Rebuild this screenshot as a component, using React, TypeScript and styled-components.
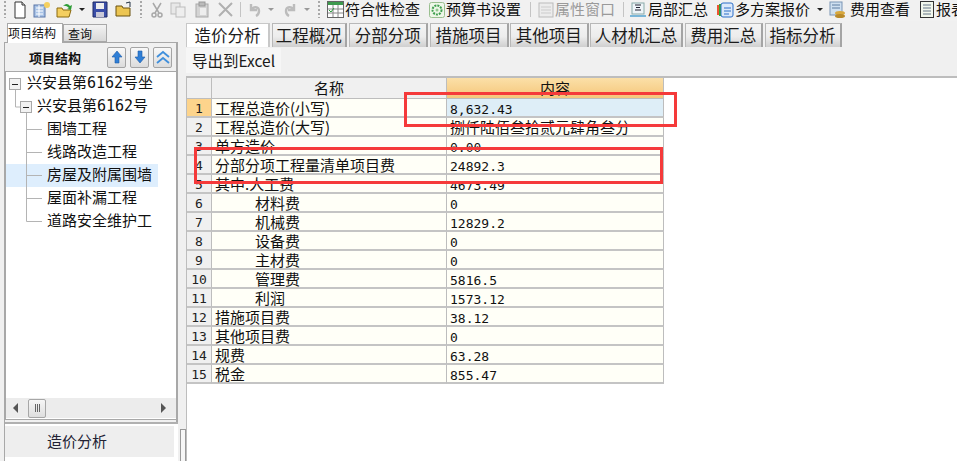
import React from 'react';
import styled, { createGlobalStyle } from 'styled-components';

const Global = createGlobalStyle`
  html, body { margin: 0; padding: 0; background: #fff; }
  #root { width: 957px; height: 461px; overflow: hidden; }
  * { box-sizing: border-box; }
`;
const FONT = `"Noto Sans CJK SC", "Liberation Sans", sans-serif`;
const BARFONT = `"Liberation Sans", "Noto Sans CJK SC", sans-serif`;
const CELLFONT = `"DejaVu Sans Mono", "Noto Sans CJK SC", monospace`;

const Page = styled.div`
  position: relative; width: 957px; height: 461px; overflow: hidden;
  background: #f0f0f0; font-family: ${FONT}; color: #111;
  display: flex; flex-direction: column;
`;
const Toolbar = styled.div`
  height: 21px; padding-bottom: 2px; display: flex; align-items: center; flex: none; overflow: hidden;
  background: #f1f1f1; font-family: ${BARFONT}; font-size: 15px; line-height: 17px; white-space: nowrap;
`;
const Cell = styled.div<{ $w: number }>`
  width: ${p => p.$w}px; flex: none; height: 17px;
  display: flex; align-items: center; justify-content: center;
`;
const Grip = styled.div<{ $w: number }>`
  width: ${p => p.$w}px; flex: none; height: 17px; display: flex; justify-content: center;
  &::before { content: ''; width: 2px; height: 17px;
    background: repeating-linear-gradient(#a8a8a8 0 2px, transparent 2px 4px); }
`;
const Rule = styled.div<{ $w: number }>`
  width: ${p => p.$w}px; flex: none; height: 15px; display: flex; justify-content: center;
  &::before { content: ''; width: 1px; background: #c4c4c4; }
`;
const Label = styled.span<{ $w: number; $off?: boolean }>`
  width: ${p => p.$w}px; flex: none; color: ${p => (p.$off ? '#9a9a9a' : '#111')};
`;
const Caret = styled.div<{ $w: number; $off?: boolean }>`
  width: ${p => p.$w}px; flex: none; display: flex; justify-content: center;
  &::before { content: ''; border: 3px solid transparent; border-bottom-width: 0;
    border-top: 3px solid ${p => (p.$off ? '#999' : '#222')}; }
`;
const Main = styled.div`
  flex: 1; display: flex; min-height: 0;
`;
const Side = styled.aside`
  width: 180px; flex: none; padding: 2px 2px 0 4px; display: flex; flex-direction: column;
`;
const SideTabs = styled.div`
  height: 19px; display: flex; padding-left: 3px; align-items: flex-end; font-size: 12px;
`;
const SideTab = styled.div<{ $active?: boolean }>`
  height: ${p => (p.$active ? 20 : 18)}px; width: ${p => (p.$active ? 56 : 44)}px;
  margin-bottom: ${p => (p.$active ? -1 : 0)}px; z-index: ${p => (p.$active ? 1 : 0)};
  line-height: 17px; padding-left: ${p => (p.$active ? 0 : 4)}px;
  background: ${p => (p.$active ? '#fff' : 'linear-gradient(#f3f3f3,#d8d8d8)')};
  border: 1px solid #a8a8a8; border-bottom: ${p => (p.$active ? 'none' : '1px solid #a8a8a8')};
`;
const SidePanel = styled.div`
  flex: 1; border: 1px solid #a8a8a8; border-bottom: none; border-right-width: 2px; background: #f0f0f0;
  display: flex; flex-direction: column; min-height: 0;
`;
const SideHead = styled.div`
  height: 28px; flex: none; display: flex; align-items: center; padding-left: 24px;
  font-size: 13px; font-weight: 700;
`;
const HeadTitle = styled.span` width: 78px; flex: none; `;
const HeadBtn = styled.div`
  width: 20px; height: 21px; margin-right: 4px; border: 1px solid #a4a4a4; border-radius: 2px;
  background: linear-gradient(#f8f8f8, #dcdcdc); display: flex; align-items: center; justify-content: center;
`;
const TreeBox = styled.div`
  height: 349px; flex: none; background: #fff; border: 1px solid #a8a8a8;
  display: flex; flex-direction: column; width: 172px;
`;
const Tree = styled.div` flex: 1; font-size: 15px; line-height: 23px; `;
const TreeRow = styled.div<{ $sel?: boolean }>`
  height: 23px; display: flex; align-items: center; white-space: nowrap; width: 152px;
  background: ${p => (p.$sel ? '#deeefd' : 'transparent')};
  font-family: ${CELLFONT};
`;
const Node = styled.svg` flex: none; display: block; `;
const HScroll = styled.div`
  height: 20px; flex: none; margin: 0 0 1px 0; background: #ececec; display: flex; align-items: center;
  padding-left: 7px;
`;
const Arrow = styled.div<{ $dir: 'l' | 'r' }>`
  border: 4px solid transparent; border-width: 5px 0;
  ${p => (p.$dir === 'l' ? 'border-right: 5px solid #555;' : 'border-left: 5px solid #555;')}
  flex: none; height: 10px; width: 5px;
`;
const Thumb = styled.div`
  width: 18px; height: 19px; margin: 0 115px 0 10px; flex: none; border: 1px solid #a6a6a6; border-radius: 2px;
  background: linear-gradient(#f6f6f6,#dedede); display: flex; align-items: center; justify-content: center; gap: 1px;
  & > i { width: 1px; height: 8px; background: #666; display: block; }
`;
const SideFoot = styled.div`
  margin-top: 2px; border-top: 2px solid #b0b0b0; padding: 2px 2px 0 0; flex: 1; background: #fff;
  margin-right: -2px;
`;
const FootBtn = styled.div`
  height: 31px; background: #eee; text-align: center; font-size: 15px; line-height: 30px; width: 169px; color: #223;
  padding-right: 25px;
`;
const Splitter = styled.div`
  width: 6px; flex: none; display: flex; align-items: flex-end; justify-content: center;
  &::before { content: ''; width: 4px; height: 31px; background: #f6f6f6; border: 1px solid #999; border-bottom: none; }
`;
const Content = styled.section`
  flex: 1; display: flex; flex-direction: column; min-width: 0; padding-top: 2px;
`;
const TabBar = styled.div` height: 24px; display: flex; flex: none; font-size: 16.5px; `;
const Tab = styled.div<{ $w: number; $active?: boolean }>`
  width: ${p => p.$w}px; height: 24px; flex: none; text-align: center; line-height: 23px; margin-right: 1.5px;
  background: ${p => (p.$active ? '#fff' : 'linear-gradient(#f4f4f4 0%, #ececec 55%, #cfcfcf 100%)')};
  border: 1px solid ${p => (p.$active ? '#c8c8c8' : '#b8b8b8')}; border-bottom: none;
  border-right: 2px solid ${p => (p.$active ? '#c8c8c8' : '#a4a4a4')};
  color: #1c1c1c; white-space: nowrap;
`;
const ActionBar = styled.div` height: 31px; flex: none; padding-top: 1px; border-bottom: 2px solid #bdbdbd; `;
const ExportBtn = styled.div`
  width: 95px; height: 25px; background: #f6f6f6; font-size: 15.5px; line-height: 25px; padding-left: 6px; color: #1a1a1a; white-space: nowrap;
`;
const Sheet = styled.div` flex: 1; background: #fff; border-left: 1px solid #bdbdbd; `;
const Table = styled.div`
  width: 477px; display: grid; grid-template-columns: 25px 235px 217px; grid-template-rows: 21px repeat(15, 19px); font-size: 15px;
`;
const Th = styled.div<{ $hot?: boolean }>`
  text-align: center; line-height: 20px; color: #111;
  background: ${p => (p.$hot ? 'linear-gradient(#fbe0a8,#f5c67a)' : '#f0f0f0')};
  border-right: 1px solid #bdbdbd; border-bottom: 1px solid #bdbdbd;
`;
const Num = styled.div<{ $hot?: boolean }>`
  background: ${p => (p.$hot ? '#fdd48c' : '#f0f0f0')}; text-align: center; line-height: 20px;
  border-right: 1px solid #bdbdbd; border-bottom: 2px solid #c4c4c4; font-family: ${CELLFONT}; font-size: 13px; color: #222;
`;
const Td = styled.div<{ $indent?: boolean; $hot?: boolean; $mono?: boolean }>`
  background: ${p => (p.$hot ? '#deeef7' : '#fffff7')}; white-space: nowrap;
  padding-left: ${p => (p.$indent ? 43 : 3)}px; line-height: ${p => (p.$mono ? 21 : 18)}px;
  border-right: 1px solid #bdbdbd; border-bottom: 2px solid #c4c4c4; color: #111;
  font-family: ${p => (p.$mono ? CELLFONT : FONT)}; font-size: ${p => (p.$mono ? 13 : 15)}px;
`;
const RedBox = styled.div<{ $x: number; $y: number; $w: number; $h: number }>`
  position: absolute; left: ${p => p.$x}px; top: ${p => p.$y}px; width: ${p => p.$w}px; height: ${p => p.$h}px;
  border: 3px solid #f53a3a; pointer-events: none;
`;

const Doc = () => (
  <svg width="16" height="18" viewBox="0 0 16 18"><path d="M3 1h7l3 3v13H3z" fill="#fff" stroke="#333"/><path d="M10 1v3h3" fill="#ddd" stroke="#333"/></svg>
);
const Sheets = () => (
  <svg width="18" height="18" viewBox="0 0 18 18"><rect x="1" y="4" width="11" height="12" fill="#a9c3e6" stroke="#5a76a8"/><path d="M3 7h7M3 10h7M3 13h7M6 4v12" stroke="#fff"/><circle cx="14" cy="4" r="3" fill="#f5d060"/></svg>
);
const FolderOpen = () => (
  <svg width="18" height="18" viewBox="0 0 18 18"><path d="M1 7h5l1 2h8l-2 7H1z" fill="#f4cf60" stroke="#8a6a10"/><path d="M7 5q4-4 7 0l2-1-1 5-4-1 2-1q-3-3-6-2z" fill="#2e9c36"/></svg>
);
const Save = () => (
  <svg width="16" height="17" viewBox="0 0 16 17"><path d="M1 1h14v15H1z" fill="#3a4ea8" stroke="#1f2a66"/><rect x="4" y="2" width="8" height="6" fill="#eee"/><rect x="4" y="11" width="8" height="5" fill="#c9c9d8"/></svg>
);
const FolderMini = () => (
  <svg width="17" height="17" viewBox="0 0 17 17"><path d="M1 5h6l1 2h7v8H1z" fill="#ecc552" stroke="#6b5310"/><path d="M11 2l4-1v5" fill="none" stroke="#234"/></svg>
);
const Scissors = () => (
  <svg width="12" height="16" viewBox="0 0 12 16" fill="none" stroke="#a8a8a8" strokeWidth="1.5"><path d="M2 1l6 10M10 1L4 11"/><circle cx="3" cy="13" r="2"/><circle cx="9" cy="13" r="2"/></svg>
);
const CopyI = () => (
  <svg width="16" height="16" viewBox="0 0 16 16"><rect x="1" y="1" width="9" height="11" fill="#e8e8e8" stroke="#bdbdbd"/><rect x="6" y="5" width="9" height="10" fill="#eee" stroke="#bdbdbd"/></svg>
);
const PasteI = () => (
  <svg width="16" height="17" viewBox="0 0 16 17"><rect x="2" y="3" width="12" height="13" fill="#d4d4d4" stroke="#aaa"/><rect x="5" y="1" width="6" height="4" fill="#bbb" stroke="#999"/><rect x="6" y="7" width="6" height="7" fill="#eee"/></svg>
);
const CloseI = () => (
  <svg width="15" height="15" viewBox="0 0 15 15" stroke="#b0b0b0" strokeWidth="2"><path d="M1 1l13 13M14 1L1 14"/></svg>
);
const Undo = ({ flip }: { flip?: boolean }) => (
  <svg width="15" height="15" viewBox="0 0 15 15" fill="none" stroke="#bcbcbc" strokeWidth="2.4" style={flip ? { transform: 'scaleX(-1)' } : undefined}><path d="M4 2v6h6M4.500 8C6 4 12 4 12 9c0 2-1 4-3 5"/></svg>
);
const TableI = () => (
  <svg width="17" height="17" viewBox="0 0 17 17"><rect x="0.500" y="0.500" width="16" height="16" fill="#fff" stroke="#666"/><rect x="1" y="1" width="15" height="3" fill="#3d9a4d"/><path d="M1 8h15M1 12h15M6 4v12M11 4v12" stroke="#888"/><path d="M2 9l2 2 3-4" stroke="#2b9c3c" fill="none"/></svg>
);
const Gear = () => (
  <svg width="16" height="16" viewBox="0 0 16 16"><rect x="0.500" y="0.500" width="15" height="15" rx="2" fill="#eef7e8" stroke="#9abf90"/><circle cx="8" cy="8" r="4.500" fill="none" stroke="#3f9f4f" strokeWidth="2" strokeDasharray="2 1"/><circle cx="8" cy="8" r="1.500" fill="#8fc78f"/></svg>
);
const WindowI = () => (
  <svg width="16" height="16" viewBox="0 0 16 16"><rect x="1" y="1" width="14" height="14" fill="#ececec" stroke="#bbb"/><path d="M3 5h10M3 8h10M3 11h10" stroke="#ccc"/></svg>
);
const SigmaI = () => (
  <svg width="16" height="16" viewBox="0 0 16 16"><rect x="2" y="1" width="12" height="11" fill="#eef4f8" stroke="#8aa"/><path d="M5 3h6M6 5.500h4M5 8h6" stroke="#223" /><rect x="0" y="13" width="16" height="2" fill="#79b6d8"/></svg>
);
const MultiI = () => (
  <svg width="17" height="16" viewBox="0 0 17 16"><rect x="0" y="3" width="3" height="10" fill="#e53"/><rect x="2" y="2" width="3" height="12" fill="#3a3"/><rect x="4" y="1" width="12" height="14" rx="2" fill="#dbe8fa" stroke="#2c6fc9"/><path d="M7 6h7M7 9h7M7 12h5" stroke="#2c6fc9"/></svg>
);
const CostI = () => (
  <svg width="17" height="18" viewBox="0 0 17 18"><rect x="1" y="1" width="12" height="13" fill="#cfe0f0" stroke="#7a95b5"/><path d="M3 4h8M3 7h8" stroke="#5c7da0"/><ellipse cx="11" cy="12" rx="5" ry="2" fill="#d8a83e"/><ellipse cx="11" cy="15" rx="5" ry="2" fill="#b98a2a"/></svg>
);
const ReportI = () => (
  <svg width="14" height="17" viewBox="0 0 14 17"><rect x="0.500" y="0.500" width="13" height="16" fill="#f2f7ec" stroke="#333"/><path d="M3 4h8M3 7h8M3 10h8M3 13h8" stroke="#678"/></svg>
);
const UpDown = ({ down }: { down?: boolean }) => (
  <svg width="12" height="14" viewBox="0 0 12 14" style={down ? { transform: 'rotate(180deg)' } : undefined}><path d="M6 1l5 6H8v6H4V7H1z" fill="#2f7fd6" stroke="#1c5aa8" strokeWidth="0.600"/></svg>
);
const Collapse = () => (
  <svg width="16" height="15" viewBox="0 0 16 15" fill="none" stroke="#3f8fdc" strokeWidth="1.800"><path d="M2 7l6-5 6 5M2 13l6-5 6 5"/></svg>
);

const L = '#b4b4b4';
const Box = ({ x, y }: { x: number; y: number }) => (
  <g>
    <rect x={x + 0.5} y={y + 0.5} width="11" height="11" fill="#f2f2f2" stroke="#a8a8a8" />
    <path d={`M${x + 3} ${y + 6.5}h6`} stroke="#222" />
  </g>
);
type Kind = 'root' | 'sub' | 'leaf' | 'last';
const Connector = ({ kind }: { kind: Kind }) => {
  const w = kind === 'root' ? 21 : kind === 'sub' ? 31 : 41;
  return (
    <Node width={w} height="23" viewBox={`0 0 ${w} 23`}>
      {kind === 'root' && <><path d="M9.500 18V23" stroke={L} /><Box x={3} y={6} /></>}
      {kind === 'sub' && <><path d="M9.500 0V12H14M20.500 18V23" stroke={L} fill="none" /><Box x={14} y={6} /></>}
      {kind === 'leaf' && <path d="M20.500 0V23M20 11.500H36" stroke={L} fill="none" />}
      {kind === 'last' && <path d="M20.500 0V11.500H36" stroke={L} fill="none" />}
    </Node>
  );
};

const tree: { t: string; k: Kind; sel?: boolean }[] = [
  { t: '兴安县第6162号坐', k: 'root' },
  { t: '兴安县第6162号', k: 'sub' },
  { t: '围墙工程', k: 'leaf' },
  { t: '线路改造工程', k: 'leaf' },
  { t: '房屋及附属围墙', k: 'leaf', sel: true },
  { t: '屋面补漏工程', k: 'leaf' },
  { t: '道路安全维护工', k: 'last' },
];
const tabs = [
  ['造价分析', 84], ['工程概况', 75.5], ['分部分项', 79.5], ['措施项目', 79], ['其他项目', 78.5],
  ['人材机汇总', 93], ['费用汇总', 78.5], ['指标分析', 77],
] as const;
const rows: { n: string; v: string; i?: boolean }[] = [
  { n: '工程总造价(小写)', v: '8,632.43' },
  { n: '工程总造价(大写)', v: '捌仟陆佰叁拾贰元肆角叁分' },
  { n: '单方造价', v: '0.00' },
  { n: '分部分项工程量清单项目费', v: '24892.3' },
  { n: '其中:人工费', v: '4673.49' },
  { n: '材料费', v: '0', i: true },
  { n: '机械费', v: '12829.2', i: true },
  { n: '设备费', v: '0', i: true },
  { n: '主材费', v: '0', i: true },
  { n: '管理费', v: '5816.5', i: true },
  { n: '利润', v: '1573.12', i: true },
  { n: '措施项目费', v: '38.12' },
  { n: '其他项目费', v: '0' },
  { n: '规费', v: '63.28' },
  { n: '税金', v: '855.47' },
];

export default function App() {
  return (
    <Page>
      <Global />
      <Toolbar>
        <Grip $w={9} />
        <Cell $w={22}><Doc /></Cell>
        <Cell $w={22}><Sheets /></Cell>
        <Cell $w={24}><FolderOpen /></Cell>
        <Caret $w={10} />
        <Cell $w={25}><Save /></Cell>
        <Cell $w={23}><FolderMini /></Cell>
        <Grip $w={12} />
        <Cell $w={20}><Scissors /></Cell>
        <Cell $w={22}><CopyI /></Cell>
        <Cell $w={25}><PasteI /></Cell>
        <Cell $w={22}><CloseI /></Cell>
        <Rule $w={8} />
        <Cell $w={20}><Undo /></Cell>
        <Caret $w={14} $off />
        <Cell $w={24}><Undo flip /></Cell>
        <Caret $w={10} $off />
        <Grip $w={14} />
        <Cell $w={19}><TableI /></Cell>
        <Label $w={82}>符合性检查</Label>
        <Cell $w={19}><Gear /></Cell>
        <Label $w={78}>预算书设置</Label>
        <Rule $w={13} />
        <Cell $w={18}><WindowI /></Cell>
        <Label $w={64} $off>属性窗口</Label>
        <Rule $w={8} />
        <Cell $w={21}><SigmaI /></Cell>
        <Label $w={68}>局部汇总</Label>
        <Cell $w={19}><MultiI /></Cell>
        <Label $w={80}>多方案报价</Label>
        <Caret $w={10} />
        <Cell $w={25}><CostI /></Cell>
        <Label $w={67}>费用查看</Label>
        <Cell $w={19}><ReportI /></Cell>
        <Label $w={21}>报表</Label>
      </Toolbar>
      <Main>
        <Side>
          <SideTabs>
            <SideTab $active>项目结构</SideTab>
            <SideTab>查询</SideTab>
          </SideTabs>
          <SidePanel>
            <SideHead>
              <HeadTitle>项目结构</HeadTitle>
              <HeadBtn><UpDown /></HeadBtn>
              <HeadBtn><UpDown down /></HeadBtn>
              <HeadBtn><Collapse /></HeadBtn>
            </SideHead>
            <TreeBox>
              <Tree>
                {tree.map(r => (
                  <TreeRow key={r.t} $sel={r.sel}>
                    <Connector kind={r.k} />
                    {r.t}
                  </TreeRow>
                ))}
              </Tree>
              <HScroll>
                <Arrow $dir="l" />
                <Thumb><i /><i /><i /></Thumb>
                <Arrow $dir="r" />
              </HScroll>
            </TreeBox>
            <SideFoot>
              <FootBtn>造价分析</FootBtn>
            </SideFoot>
          </SidePanel>
        </Side>
        <Splitter />
        <Content>
          <TabBar>
            {tabs.map(([t, w], i) => (
              <Tab key={t} $w={w} $active={i === 0}>{t}</Tab>
            ))}
          </TabBar>
          <ActionBar>
            <ExportBtn>导出到Excel</ExportBtn>
          </ActionBar>
          <Sheet>
            <Table>
              <Th />
              <Th>名称</Th>
              <Th $hot>内容</Th>
              {rows.map((r, i) => (
                <React.Fragment key={r.n}>
                  <Num $hot={i === 0}>{i + 1}</Num>
                  <Td $indent={r.i}>{r.n}</Td>
                  <Td $hot={i === 0} $mono={i !== 1}>{r.v}</Td>
                </React.Fragment>
              ))}
            </Table>
          </Sheet>
        </Content>
      </Main>
      <RedBox $x={404} $y={92} $w={273} $h={35} />
      <RedBox $x={194} $y={147} $w={469} $h={37} />
    </Page>
  );
}
